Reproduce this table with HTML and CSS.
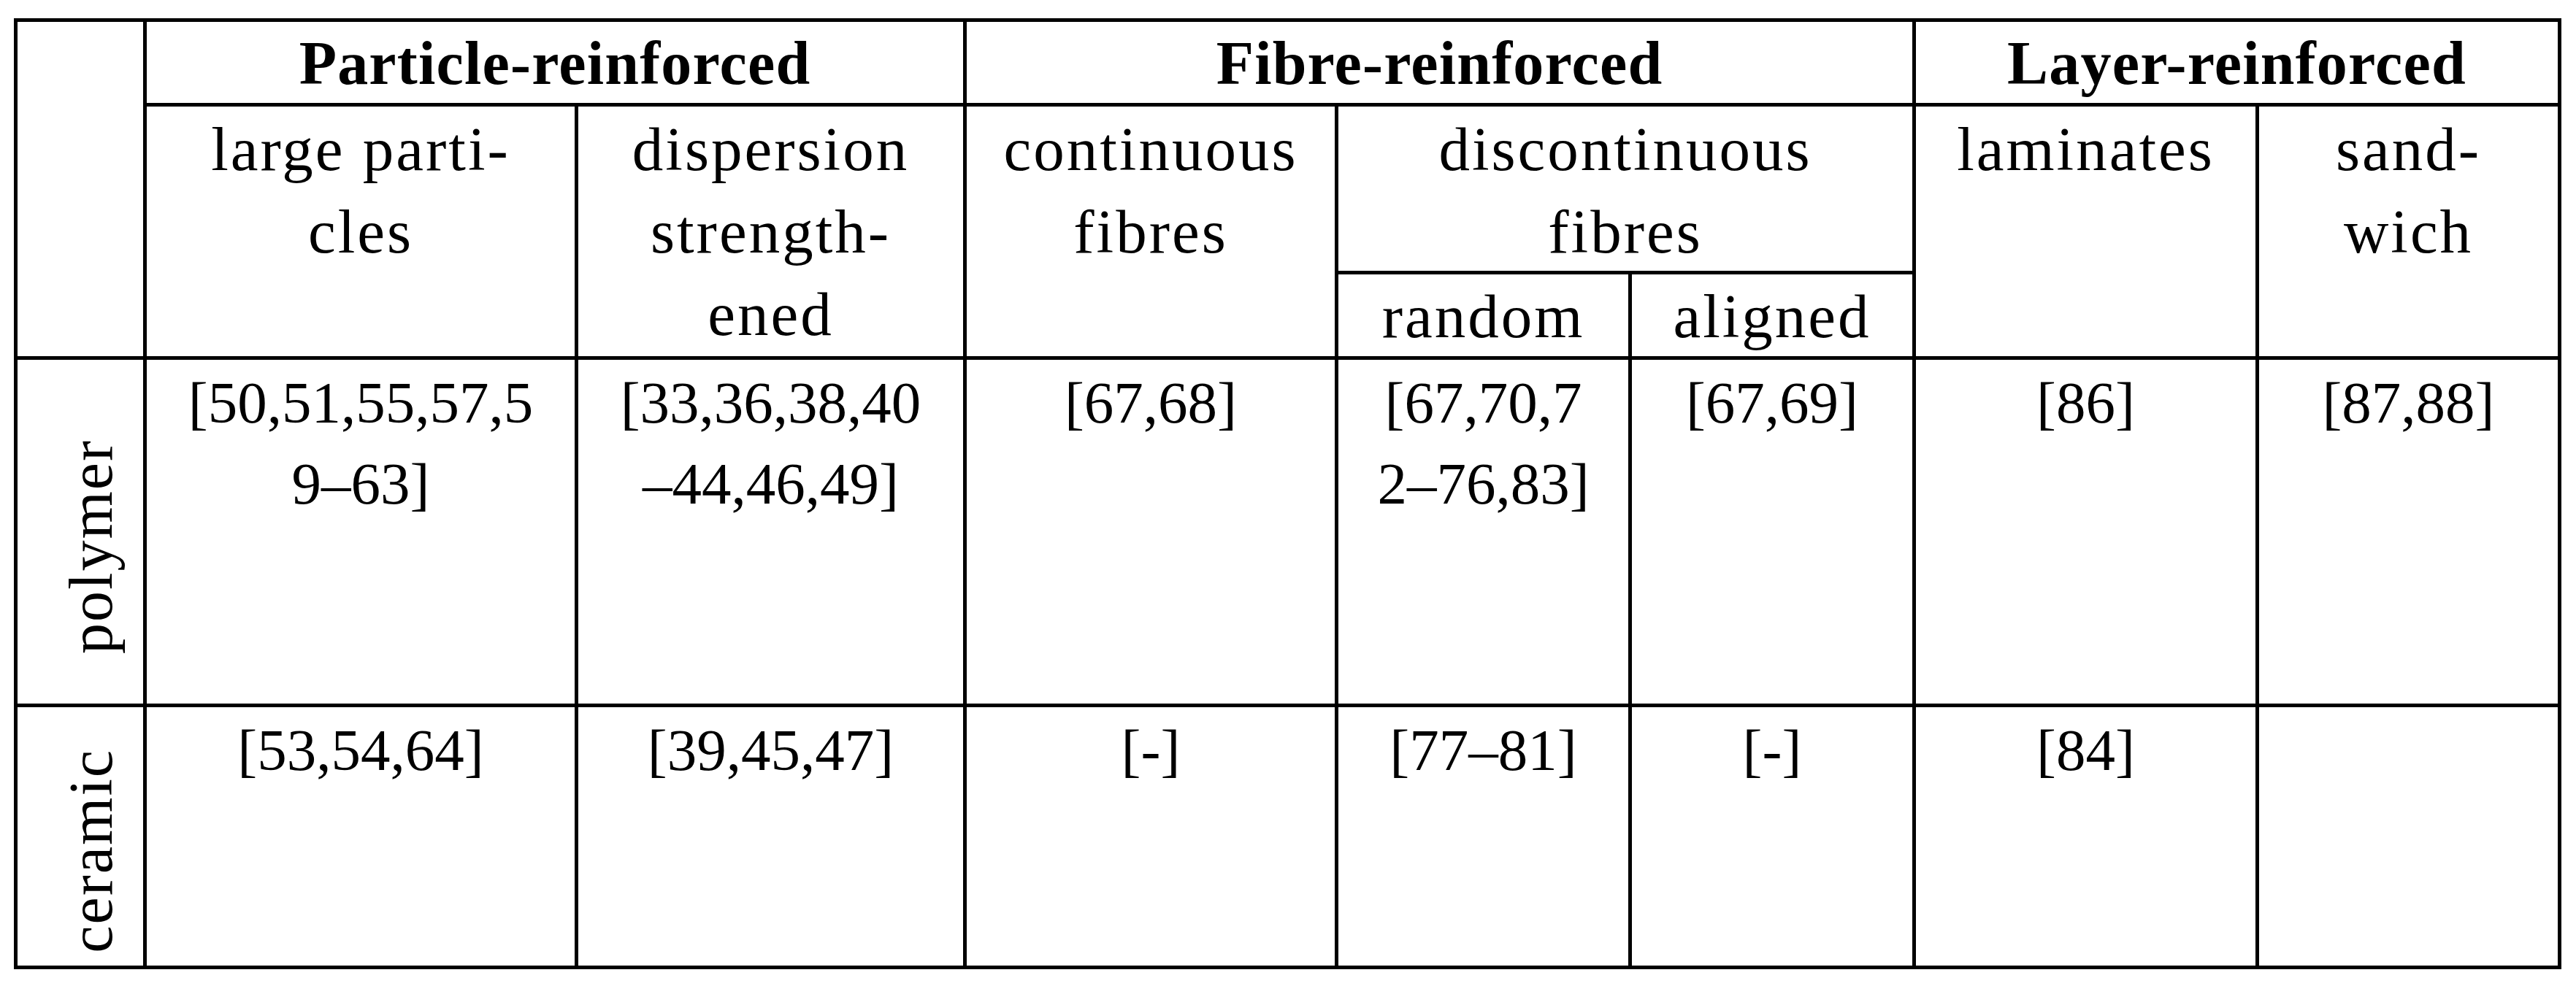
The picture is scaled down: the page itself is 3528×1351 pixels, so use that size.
FILE: index.html
```html
<!DOCTYPE html>
<html lang="en">
<head>
<meta charset="utf-8">
<title>Composite classification</title>
<link rel="stylesheet" href="styles.css">
</head>
<body>
<div class="tbl" role="table">
  <div class="cell corner"></div>
  <div class="cell grp g-particle">Particle-reinforced</div>
  <div class="cell grp g-fibre">Fibre-reinforced</div>
  <div class="cell grp g-layer">Layer-reinforced</div>

  <div class="cell sub c-large">large parti-<br>cles</div>
  <div class="cell sub c-disp">dispersion<br>strength-<br>ened</div>
  <div class="cell sub c-cont">continuous<br>fibres</div>
  <div class="cell sub c-discont">discontinuous<br>fibres</div>
  <div class="cell sub c-lam">laminates</div>
  <div class="cell sub c-sand">sand-<br>wich</div>
  <div class="cell sub3 c-random">random</div>
  <div class="cell sub3 c-aligned">aligned</div>

  <div class="cell rowlabel r-poly"><span class="vtext">polymer</span></div>
  <div class="cell data r-poly">[50,51,55,57,5<br>9–63]</div>
  <div class="cell data r-poly">[33,36,38,40<br>–44,46,49]</div>
  <div class="cell data r-poly">[67,68]</div>
  <div class="cell data r-poly">[67,70,7<br>2–76,83]</div>
  <div class="cell data r-poly">[67,69]</div>
  <div class="cell data r-poly">[86]</div>
  <div class="cell data r-poly">[87,88]</div>

  <div class="cell rowlabel r-cer"><span class="vtext">ceramic</span></div>
  <div class="cell data r-cer">[53,54,64]</div>
  <div class="cell data r-cer">[39,45,47]</div>
  <div class="cell data r-cer">[-]</div>
  <div class="cell data r-cer">[77–81]</div>
  <div class="cell data r-cer">[-]</div>
  <div class="cell data r-cer">[84]</div>
  <div class="cell data r-cer"></div>
</div>
</body>
</html>
```

FILE: styles.css
```css
html, body {
  margin: 0;
  padding: 0;
  background: #ffffff;
}

body {
  padding: 25px 0 0 19px;
  font-family: "Liberation Serif", "Times New Roman", serif;
  color: #000000;
}

.tbl {
  display: grid;
  grid-template-columns: 172px 586px 527px 504px 397px 384px 465px 409px;
  grid-template-rows: 111px 225px 112px 471px 354px;
  gap: 5px;
  padding: 5px;
  background: #000000;
  width: max-content;
  font-size: 81px;
  line-height: 111px;
}

.cell {
  background: #ffffff;
  text-align: center;
  white-space: nowrap;
}

.corner { grid-column: 1; grid-row: 1 / span 3; }

.grp {
  font-weight: bold;
  font-size: 84px;
  letter-spacing: 1.2px;
  line-height: 112px;
  display: flex;
  align-items: center;
  justify-content: center;
  padding-top: 3px;
}
.g-particle { grid-column: 2 / span 2; grid-row: 1; }
.g-fibre { grid-column: 4 / span 3; grid-row: 1; }
.g-layer { grid-column: 7 / span 2; grid-row: 1; }

.sub,
.sub3 {
  font-size: 85px;
  letter-spacing: 3px;
  line-height: 113px;
}
.sub { padding-top: 2px; }
.c-large { grid-column: 2; grid-row: 2 / span 2; }
.c-disp { grid-column: 3; grid-row: 2 / span 2; }
.c-cont { grid-column: 4; grid-row: 2 / span 2; }
.c-discont { grid-column: 5 / span 2; grid-row: 2; }
.c-lam { grid-column: 7; grid-row: 2 / span 2; }
.c-sand { grid-column: 8; grid-row: 2 / span 2; }

.sub3 {
  display: flex;
  align-items: center;
  justify-content: center;
  padding-top: 2px;
}
.c-random { grid-column: 5; grid-row: 3; }
.c-aligned { grid-column: 6; grid-row: 3; }

.r-poly { grid-row: 4; }
.r-cer { grid-row: 5; }

.data { padding-top: 4px; }

.rowlabel {
  grid-column: 1;
  display: flex;
  align-items: center;
  justify-content: center;
  padding-top: 40px;
  padding-left: 30px;
}

.vtext {
  writing-mode: vertical-rl;
  transform: rotate(180deg);
  font-size: 84px;
  letter-spacing: 2px;
  line-height: 1;
}
```
